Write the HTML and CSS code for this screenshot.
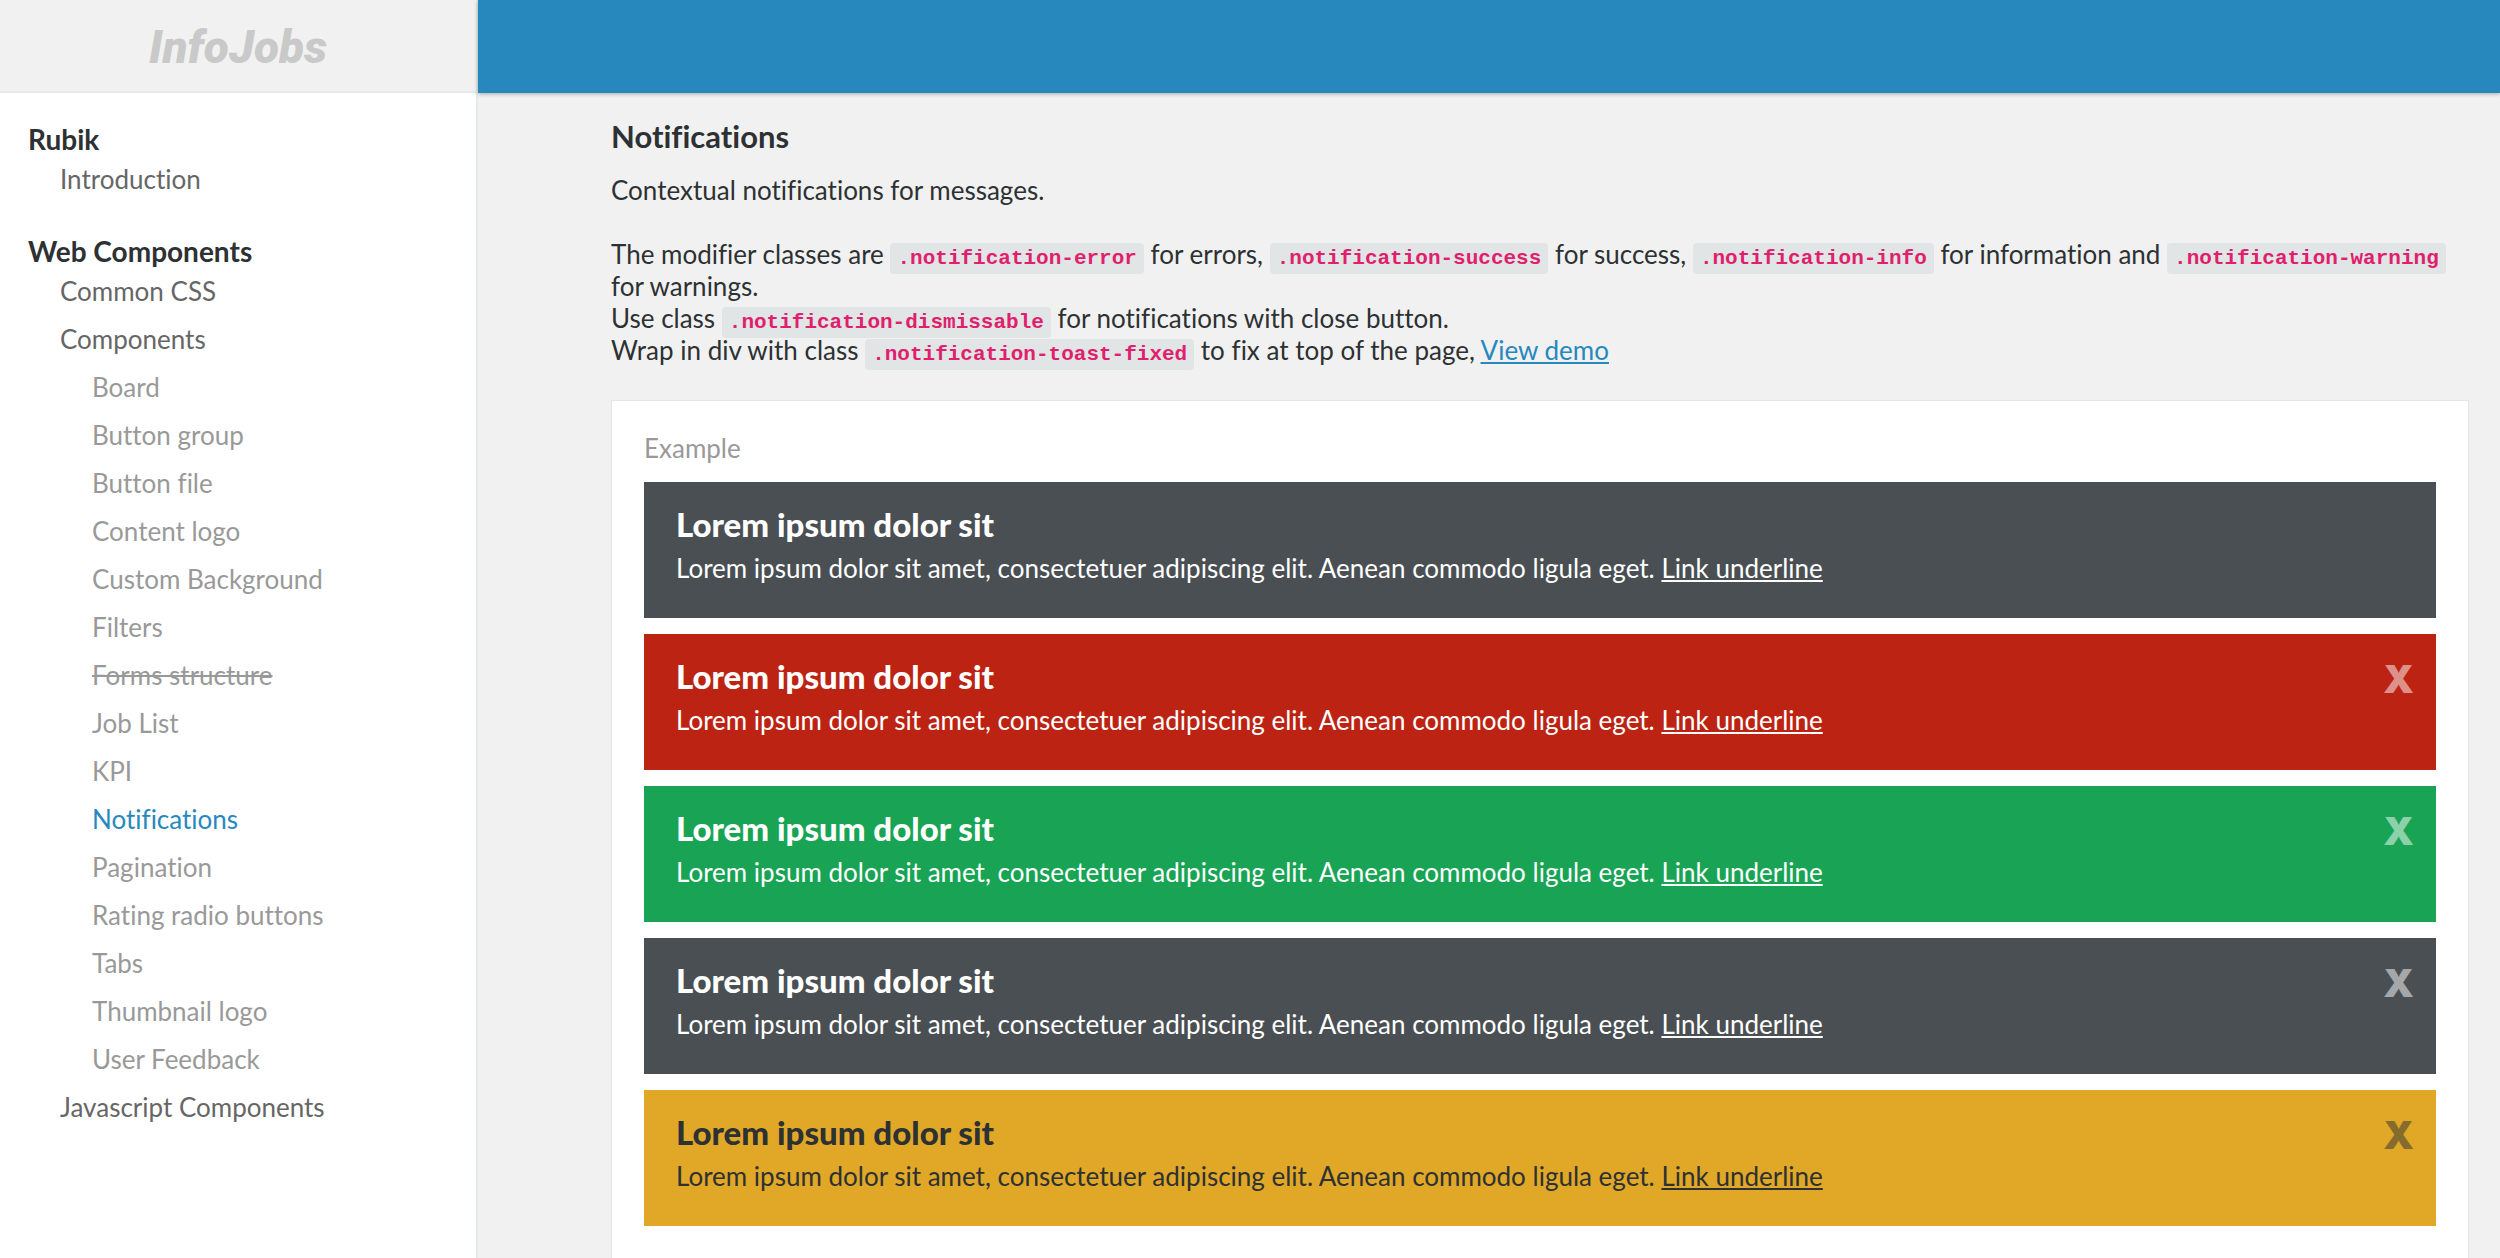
FILE: index.html
```html
<!DOCTYPE html>
<html lang="en">
<head>
<meta charset="utf-8">
<meta name="viewport" content="width=device-width, initial-scale=1">
<title>Notifications - Rubik</title>
<link rel="stylesheet" href="styles.css">
</head>
<body>
<div class="layout">
  <aside class="sidebar">
    <a class="logo" href="#">InfoJobs</a>
    <nav class="nav">
      <section class="nav-group">
        <h2 class="nav-title">Rubik</h2>
        <ul class="nav-list">
          <li><a href="#">Introduction</a></li>
        </ul>
      </section>
      <section class="nav-group">
        <h2 class="nav-title">Web Components</h2>
        <ul class="nav-list">
          <li><a href="#">Common CSS</a></li>
          <li><a href="#">Components</a>
            <ul class="nav-sublist">
              <li><a href="#">Board</a></li>
              <li><a href="#">Button group</a></li>
              <li><a href="#">Button file</a></li>
              <li><a href="#">Content logo</a></li>
              <li><a href="#">Custom Background</a></li>
              <li><a href="#">Filters</a></li>
              <li><a class="is-deprecated" href="#">Forms structure</a></li>
              <li><a href="#">Job List</a></li>
              <li><a href="#">KPI</a></li>
              <li><a class="is-active" href="#">Notifications</a></li>
              <li><a href="#">Pagination</a></li>
              <li><a href="#">Rating radio buttons</a></li>
              <li><a href="#">Tabs</a></li>
              <li><a href="#">Thumbnail logo</a></li>
              <li><a href="#">User Feedback</a></li>
            </ul>
          </li>
          <li><a href="#">Javascript Components</a></li>
        </ul>
      </section>
    </nav>
  </aside>
  <div class="page">
    <header class="topbar"></header>
    <main class="content">
      <h1 class="title">Notifications</h1>
      <p class="lead">Contextual notifications for messages.</p>
      <p class="description">The modifier classes are <code>.notification-error</code> for errors, <code>.notification-success</code> for success, <code>.notification-info</code> for information and <code>.notification-warning</code> <br>for warnings.<br>
        Use class <code>.notification-dismissable</code> for notifications with close button.<br>
        Wrap in div with class <code>.notification-toast-fixed</code> to fix at top of the page, <a href="#">View demo</a></p>
      <section class="example">
        <p class="example-label">Example</p>
        <div class="notification">
          <h3>Lorem ipsum dolor sit</h3>
          <p>Lorem ipsum dolor sit amet, consectetuer adipiscing elit. Aenean commodo ligula eget. <a href="#">Link underline</a></p>
        </div>
        <div class="notification notification-error">
          <h3>Lorem ipsum dolor sit</h3>
          <p>Lorem ipsum dolor sit amet, consectetuer adipiscing elit. Aenean commodo ligula eget. <a href="#">Link underline</a></p>
          <button class="close" type="button" aria-label="Close">X</button>
        </div>
        <div class="notification notification-success">
          <h3>Lorem ipsum dolor sit</h3>
          <p>Lorem ipsum dolor sit amet, consectetuer adipiscing elit. Aenean commodo ligula eget. <a href="#">Link underline</a></p>
          <button class="close" type="button" aria-label="Close">X</button>
        </div>
        <div class="notification notification-info">
          <h3>Lorem ipsum dolor sit</h3>
          <p>Lorem ipsum dolor sit amet, consectetuer adipiscing elit. Aenean commodo ligula eget. <a href="#">Link underline</a></p>
          <button class="close" type="button" aria-label="Close">X</button>
        </div>
        <div class="notification notification-warning">
          <h3>Lorem ipsum dolor sit</h3>
          <p>Lorem ipsum dolor sit amet, consectetuer adipiscing elit. Aenean commodo ligula eget. <a href="#">Link underline</a></p>
          <button class="close" type="button" aria-label="Close">X</button>
        </div>
      </section>
    </main>
  </div>
</div>
</body>
</html>
```
FILE: styles.css
```css
* {
  box-sizing: border-box;
}

html {
  overflow: hidden;
}

body {
  margin: 0;
  background: #f1f1f1;
  color: #2d3133;
  font-family: Lato, "Liberation Sans", sans-serif;
  font-size: 26px;
  font-variant-ligatures: none;
  line-height: 32px;
}

h1,
h2,
h3,
p,
ul {
  margin: 0;
  padding: 0;
}

ul {
  list-style: none;
}

.layout {
  display: flex;
  min-height: 100vh;
}

/* Sidebar */
.sidebar {
  flex: 0 0 478px;
  background: #fff;
  border-right: 2px solid #e6e9e9;
}

.logo {
  display: flex;
  align-items: center;
  justify-content: center;
  height: 93px;
  padding-top: 2px;
  background: #f1f1f1;
  border-bottom: 2px solid #e6e9e9;
  color: #c9c9c9;
  font-family: Roboto, sans-serif;
  font-size: 46px;
  font-style: italic;
  font-weight: 900;
  text-decoration: none;
}

.nav {
  padding: 26px 28px 0;
}

.nav-group {
  margin-bottom: 36px;
}

.nav-title {
  margin-bottom: 4px;
  font-size: 28px;
  font-weight: 700;
  line-height: 40px;
}

.nav a {
  display: block;
  padding: 0 0 16px;
  color: #666;
  text-decoration: none;
}

.nav-group:first-child a {
  padding-bottom: 0;
}

.nav-list,
.nav-sublist {
  padding-left: 32px;
}

.nav .nav-sublist a {
  color: #999;
}

.nav .nav-sublist .is-deprecated {
  text-decoration: line-through;
}

.nav .nav-sublist .is-active {
  color: #2788be;
}

/* Page */
.page {
  flex: 1;
  min-width: 0;
}

.topbar {
  height: 93px;
  background: #2788be;
  box-shadow: 0 1px 4px rgba(0, 0, 0, 0.3);
}

.content {
  padding: 24px 31px 0 133px;
}

.title {
  margin-bottom: 19px;
  font-size: 31px;
  font-weight: 700;
  line-height: 38px;
}

.lead {
  margin-bottom: 32px;
}

.description a {
  color: #2788be;
}

code {
  padding: 4px 7px;
  border-radius: 4px;
  background: #e1e5e5;
  color: #e0206c;
  font-family: "Liberation Mono", monospace;
  font-size: 21px;
  font-weight: 700;
  line-height: 20px;
}

.example {
  margin-top: 34px;
  padding: 31px 32px 32px;
  border: 1px solid #e1e5e5;
  background: #fff;
}

.example-label {
  margin-bottom: 18px;
  color: #999;
}

.notification {
  position: relative;
  margin-bottom: 16px;
  padding: 22px 32px 34px;
  background: #4a4f53;
  color: #fff;
}

.notification h3 {
  margin-bottom: 8px;
  font-size: 33px;
  font-weight: 900;
  line-height: 40px;
}

.notification a {
  color: inherit;
}

.notification-error {
  background: #bc2313;
}

.notification-success {
  background: #18a454;
}

.notification-warning {
  background: #e0a826;
  color: #2d3133;
}

.close {
  position: absolute;
  top: 25px;
  right: 22px;
  padding: 0;
  border: 0;
  background: none;
  color: inherit;
  font-family: Inter, sans-serif;
  font-size: 39px;
  font-weight: 900;
  line-height: 40px;
  opacity: 0.5;
}
```
